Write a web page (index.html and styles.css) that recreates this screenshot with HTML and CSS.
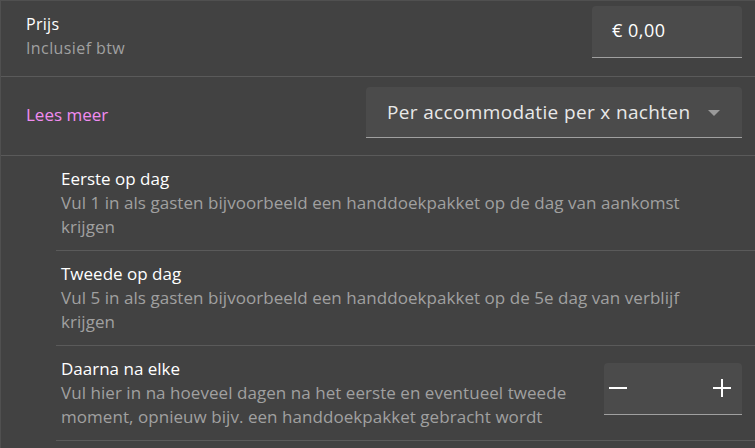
FILE: index.html
```html
<!DOCTYPE html>
<html lang="nl">
<head>
<meta charset="utf-8">
<link rel="stylesheet" href="styles.css">
</head>
<body>
<div class="panel">
  <div class="row row-price">
    <div class="label">
      <div class="title">Prijs</div>
      <div class="sub">Inclusief btw</div>
    </div>
    <div class="field field-price">€ 0,00</div>
  </div>
  <div class="row row-select">
    <a class="link">Lees meer</a>
    <div class="field field-select">
      <span>Per accommodatie per x nachten</span>
      <span class="caret"></span>
    </div>
  </div>
  <div class="subs">
    <div class="subrow">
      <div class="text">
        <div class="stitle">Eerste op dag</div>
        <div class="desc">Vul 1 in als gasten bijvoorbeeld een handdoekpakket op de dag van aankomst krijgen</div>
      </div>
    </div>
    <div class="subrow">
      <div class="text">
        <div class="stitle">Tweede op dag</div>
        <div class="desc">Vul 5 in als gasten bijvoorbeeld een handdoekpakket op de 5e dag van verblijf krijgen</div>
      </div>
    </div>
    <div class="subrow">
      <div class="text text-narrow">
        <div class="stitle">Daarna na elke</div>
        <div class="desc">Vul hier in na hoeveel dagen na het eerste en eventueel tweede moment, opnieuw bijv. een handdoekpakket gebracht wordt</div>
      </div>
      <div class="field stepper">
        <span class="minus"></span>
        <span class="plus"></span>
      </div>
    </div>
  </div>
</div>
</body>
</html>
```
FILE: styles.css
```css
html, body {
  margin: 0;
  padding: 0;
  background: #424242;
}
body {
  font-family: "Open Sans", "Noto Sans", sans-serif;
  color: #ffffff;
  width: 755px;
  height: 448px;
  overflow: hidden;
}
.panel {
  border-top: 1px solid #505050;
  border-left: 1px solid #505050;
  height: 447px;
}
.row {
  display: flex;
  justify-content: space-between;
  padding: 0 13px 0 25px;
  border-bottom: 1px solid #5a5a5a;
}
.row-price {
  padding-top: 5px;
  box-sizing: border-box;
  height: 76px;
}
.label {
  padding-top: 6px;
}
.title {
  font-size: 16px;
  line-height: 24px;
  color: #ffffff;
  letter-spacing: 0.3px;
}
.sub {
  font-size: 16px;
  line-height: 24px;
  color: #a0a0a0;
  letter-spacing: 0.4px;
}
.field {
  background: #4b4b4b;
  border-radius: 4px 4px 0 0;
  border-bottom: 1px solid #a0a0a0;
  box-sizing: border-box;
}
.field-price {
  width: 150px;
  height: 52px;
  padding: 12px 20px 0;
  font-size: 18px;
  line-height: 24px;
  color: #ffffff;
  letter-spacing: 0.5px;
}
.row-select {
  height: 79px;
  box-sizing: border-box;
  padding-top: 10px;
}
.link {
  font-size: 17px;
  color: #f08cf0;
  padding-top: 16px;
  line-height: 24px;
}
.field-select {
  width: 376px;
  height: 51px;
  padding: 0 22px 0 21px;
  display: flex;
  align-items: center;
  justify-content: space-between;
  font-size: 19px;
  letter-spacing: 0.35px;
  color: #e8e8e8;
}
.caret {
  width: 0;
  height: 0;
  border-left: 6px solid transparent;
  border-right: 6px solid transparent;
  border-top: 6px solid #9a9a9a;
  margin-top: 1px;
}
.subs {
  padding-left: 55px;
}
.subrow {
  display: flex;
  justify-content: space-between;
  align-items: flex-start;
  border-bottom: 1px solid #5a5a5a;
  padding: 11px 13px 0 5px;
  height: 95px;
  box-sizing: border-box;
}
.text {
  width: 645px;
}
.text-narrow {
  width: 530px;
}
.stitle {
  font-size: 17px;
  line-height: 24px;
  color: #ffffff;
}
.desc {
  font-size: 17px;
  line-height: 24px;
  color: #a0a0a0;
  letter-spacing: 0.05px;
}
.stepper {
  width: 138px;
  height: 52px;
  position: relative;
  margin-top: 6px;
}
.minus, .plus {
  position: absolute;
  top: 24px;
  width: 18px;
  height: 2px;
  background: #ffffff;
}
.minus { left: 5px; }
.plus { left: 109px; }
.plus::after {
  content: "";
  position: absolute;
  left: 8px;
  top: -8px;
  width: 2px;
  height: 18px;
  background: #ffffff;
}
```
